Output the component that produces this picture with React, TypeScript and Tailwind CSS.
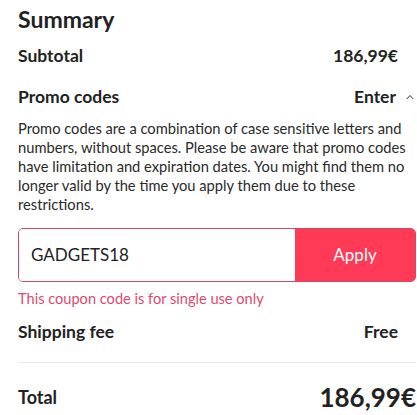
export default function App() {
  return (
    <div className="w-[417px] h-[415px] overflow-hidden bg-white pl-[18px] pr-px pt-[5px] text-[#222] font-['Lato','Liberation_Sans',sans-serif]">
      <h1 className="h-[28px] text-[23px] leading-[28px] font-bold">Summary</h1>

      {/* Subtotal */}
      <div className="mt-[11px] flex h-[24px] items-center justify-between text-[17.5px] font-bold">
        <span>Subtotal</span>
        <span className="mr-[18px]">186,99€</span>
      </div>

      {/* Promo codes */}
      <div className="mt-[17px] flex h-[24px] items-center justify-between text-[17.5px] font-bold">
        <span>Promo codes</span>
        <span className="flex items-center">
          Enter
          <svg className="ml-[10px] mr-[2px] h-[6px] w-[8px]" viewBox="0 0 8 6" fill="none">
            <path d="M0.7 5L4 1.5L7.3 5" stroke="#333" strokeWidth="1" />
          </svg>
        </span>
      </div>

      <p className="mt-[10px] text-[14.7px] leading-[19px] text-[#2a2a2a]">
        Promo codes are a combination of case sensitive letters and numbers, without spaces. Please be aware that promo codes have limitation and expiration dates. You might find them no longer valid by the time you apply them due to these restrictions.
      </p>

      {/* Coupon input */}
      <div className="mt-[14px] flex h-[54px] overflow-hidden rounded-[5px] border border-[#cf4a64]">
        <input
          readOnly
          value="GADGETS18"
          className="min-w-0 flex-1 bg-white px-[12px] text-[17px] text-[#222] outline-none"
        />
        <button className="w-[120px] bg-[#fe3a57] text-[17px] text-white">Apply</button>
      </div>
      <p className="mt-[8px] h-[18px] text-[14.6px] leading-[18px] text-[#de4a6e]">
        This coupon code is for single use only
      </p>

      {/* Shipping */}
      <div className="mt-[12px] flex h-[24px] items-center justify-between text-[17.5px] font-bold">
        <span>Shipping fee</span>
        <span className="mr-[18px]">Free</span>
      </div>

      <div className="mt-[18px] border-t border-[#ececec]" />

      {/* Total */}
      <div className="mt-[18px] flex h-[32px] items-center justify-between font-bold">
        <span className="text-[18px]">Total</span>
        <span className="text-[26px]">186,99€</span>
      </div>
    </div>
  );
}
